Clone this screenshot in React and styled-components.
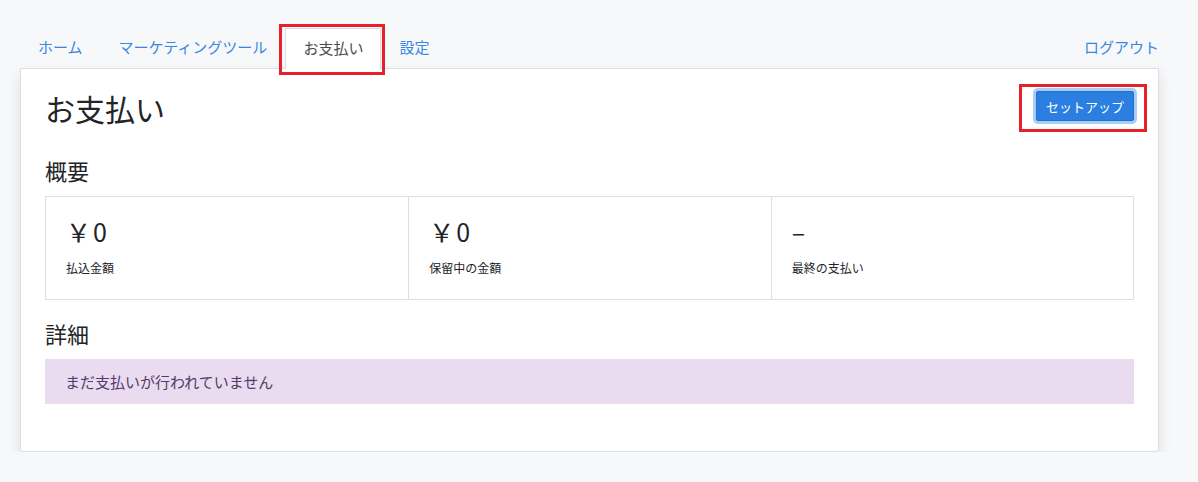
import React from 'react';
import styled, { createGlobalStyle } from 'styled-components';

// ============================================================
// PAYMENTS PAGE - tabs, summary stats and payout details
// ============================================================

const COLORS = {
  page: '#f7f8fa',
  link: '#3a87e2',
  text: '#222428',
  border: '#dcdee3',
  cellBorder: '#dedede',
  primary: '#2a7fe1',
  primaryBorder: '#2270cf',
  ring: '#a9cdf3',
  alertBg: '#e9dbf0',
  alertText: '#553a68',
  mark: '#e8202a',
};

const GlobalStyle = createGlobalStyle`
  body {
    margin: 0;
    background: ${COLORS.page};
    font-family: "Noto Sans CJK JP", "Noto Sans", sans-serif;
    color: ${COLORS.text};
  }
`;

const Page = styled.div`
  width: 1139px;
  margin-left: 20px;
  padding-top: 28px;
`;

const Nav = styled.nav`
  display: flex;
  align-items: flex-end;
  height: 40px;
`;

const Tab = styled.a`
  position: relative;
  display: flex;
  align-items: center;
  box-sizing: border-box;
  padding: 0 17px 4px;
  font-size: 15px;
  color: ${(p) => (p.$active ? '#4a4c52' : COLORS.link)};
  text-decoration: none;
  cursor: pointer;
  border: 1px solid ${(p) => (p.$active ? COLORS.border : 'transparent')};
  border-bottom: none;
  background: ${(p) => (p.$active ? '#fff' : 'transparent')};
  margin-bottom: ${(p) => (p.$active ? '-1px' : '0')};
  height: ${(p) => (p.$active ? '41px' : '40px')};
  z-index: ${(p) => (p.$active ? 2 : 0)};

  ${(p) =>
    p.$active &&
    `
    &:after {
      content: '';
      position: absolute;
      left: -7px;
      right: -5px;
      top: -5px;
      bottom: -6px;
      border: 3px solid ${COLORS.mark};
      pointer-events: none;
    }
  `}
`;

const Spacer = styled.div`
  flex: 1;
`;

const Logout = styled.a`
  font-size: 15px;
  color: ${COLORS.link};
  height: 40px;
  padding-bottom: 4px;
  box-sizing: border-box;
  display: flex;
  align-items: center;
  cursor: pointer;
`;

const Card = styled.section`
  position: relative;
  background: #fff;
  border: 1px solid ${COLORS.border};
  border-radius: 0 0 3px 3px;
  box-shadow: 0 6px 14px rgba(0, 0, 0, 0.1);
  padding: 21px 24px 47px;
`;

const Header = styled.div`
  display: flex;
  justify-content: space-between;
  align-items: flex-start;
`;

const Title = styled.h1`
  margin: 0;
  font-size: 30px;
  font-weight: 400;
  line-height: 36px;
`;

const ButtonWrap = styled.span`
  position: relative;
  margin-top: 1px;

  &:after {
    content: '';
    position: absolute;
    left: -17px;
    right: -13px;
    top: -7px;
    bottom: -11px;
    border: 3px solid ${COLORS.mark};
    pointer-events: none;
  }
`;

const Button = styled.button`
  display: block;
  height: 30px;
  padding: 0 9px;
  font-family: inherit;
  font-size: 13px;
  color: #fff;
  background: ${COLORS.primary};
  border: 1px solid ${COLORS.primaryBorder};
  border-radius: 2px;
  box-shadow: 0 0 0 3px ${COLORS.ring};
  cursor: pointer;
`;

const SectionTitle = styled.h2`
  margin: ${(p) => p.$top}px 0 11px;
  font-size: 22px;
  font-weight: 400;
  line-height: 30px;
`;

const Stats = styled.div`
  display: grid;
  grid-template-columns: repeat(3, 1fr);
  border: 1px solid ${COLORS.cellBorder};
`;

const Stat = styled.div`
  padding: 18px 20px 22px;
  & + & {
    border-left: 1px solid ${COLORS.cellBorder};
  }
`;

const Value = styled.div`
  font-size: 25px;
  letter-spacing: 2px;
  line-height: 32px;
  height: 32px;
`;

const Label = styled.div`
  margin-top: 12px;
  font-size: 12px;
  line-height: 18px;
`;

const Alert = styled.div`
  background: ${COLORS.alertBg};
  color: ${COLORS.alertText};
  font-size: 15px;
  line-height: 45px;
  padding: 0 20px;
`;

const stats = [
  { value: '￥0', label: '払込金額' },
  { value: '￥0', label: '保留中の金額' },
  { value: '–', label: '最終の支払い' },
];

const tabs = ['ホーム', 'マーケティングツール', 'お支払い', '設定'];

export default function App() {
  return (
    <>
      <GlobalStyle />
      <Page>
        <Nav>
          {tabs.map((t) => (
            <Tab key={t} $active={t === 'お支払い'}>
              {t}
            </Tab>
          ))}
          <Spacer />
          <Logout>ログアウト</Logout>
        </Nav>
        <Card>
          <Header>
            <Title>お支払い</Title>
            <ButtonWrap>
              <Button>セットアップ</Button>
            </ButtonWrap>
          </Header>
          <SectionTitle $top={29}>概要</SectionTitle>
          <Stats>
            {stats.map((s) => (
              <Stat key={s.label}>
                <Value>{s.value}</Value>
                <Label>{s.label}</Label>
              </Stat>
            ))}
          </Stats>
          <SectionTitle $top={18}>詳細</SectionTitle>
          <Alert>まだ支払いが行われていません</Alert>
        </Card>
      </Page>
    </>
  );
}
